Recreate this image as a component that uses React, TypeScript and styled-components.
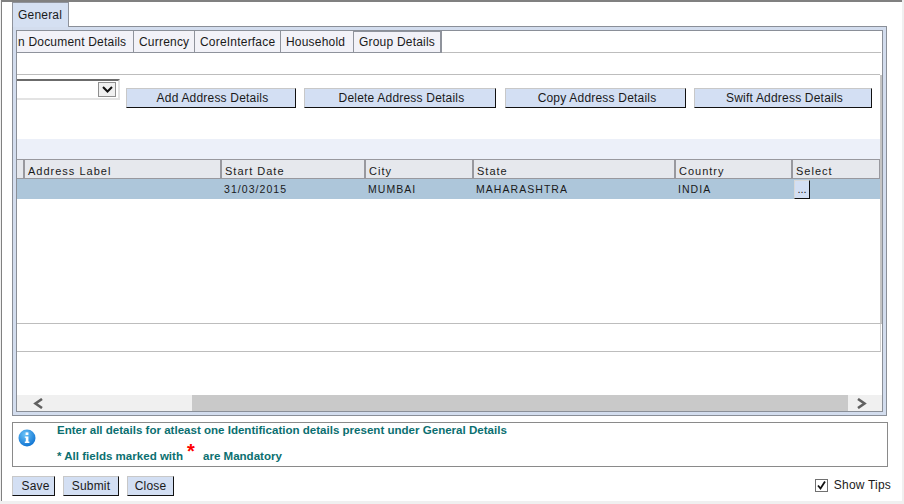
import * as React from 'react';
import styled, { createGlobalStyle } from 'styled-components';

const GlobalStyle = createGlobalStyle`
  html, body {
    margin: 0;
    padding: 0;
    background: #f0f0f0;
    font-family: 'Liberation Sans', Arial, sans-serif;
    overflow: hidden;
  }
`;

const columns = [
  { label: '', value: '', width: 8 },
  { label: 'Address Label', value: '', width: 197 },
  { label: 'Start Date', value: '31/03/2015', width: 144 },
  { label: 'City', value: 'MUMBAI', width: 108 },
  { label: 'State', value: 'MAHARASHTRA', width: 202 },
  { label: 'Country', value: 'INDIA', width: 117 },
  { label: 'Select', value: '', width: 87 },
];

const subTabs = ['n Document Details', 'Currency', 'CoreInterface', 'Household', 'Group Details'];

const actions = [
  { label: 'Add Address Details', width: 170, gap: 8 },
  { label: 'Delete Address Details', width: 192, gap: 9 },
  { label: 'Copy Address Details', width: 181, gap: 8 },
  { label: 'Swift Address Details', width: 178, gap: 0 },
];

const App = () => (
  <>
    <GlobalStyle />
    <Page>
      <Window>
        <TabStrip>
          <MainTab>General</MainTab>
        </TabStrip>
        <OuterPanel>
          <InnerPanel>
            <SubTabRow>
              {subTabs.map((t) => (
                <SubTab key={t}>{t}</SubTab>
              ))}
            </SubTabRow>
            <BlankRow />
            <Content>
              <Toolbar>
                <SelectBox>
                  <SelectArrow>
                    <svg width="11" height="7" viewBox="0 0 11 7">
                      <path d="M1 1l4.5 4.5L10 1" fill="none" stroke="#111" strokeWidth="2" />
                    </svg>
                  </SelectArrow>
                </SelectBox>
                <Actions>
                  {actions.map((a) => (
                    <ActionButton key={a.label} $width={a.width} $gap={a.gap}>
                      {a.label}
                    </ActionButton>
                  ))}
                </Actions>
              </Toolbar>
              <Band />
              <HeaderRow>
                {columns.map((c, i) => (
                  <HeaderCell key={i} $width={c.width}>
                    {c.label}
                  </HeaderCell>
                ))}
              </HeaderRow>
              <DataRow>
                {columns.map((c, i) => (
                  <DataCell key={i} $width={c.width}>
                    {c.label === 'Select' ? <PickButton>...</PickButton> : c.value}
                  </DataCell>
                ))}
              </DataRow>
              <TableBody />
            </Content>
            <FooterRow />
            <Spacer />
            <ScrollBar>
              <ScrollArrow>
                <svg width="10" height="11" viewBox="0 0 10 11">
                  <path d="M9 1L2.5 5.5 9 10" fill="none" stroke="#606060" strokeWidth="2.6" />
                </svg>
              </ScrollArrow>
              <ScrollThumb />
              <ScrollArrow>
                <svg width="10" height="11" viewBox="0 0 10 11">
                  <path d="M1 1l6.5 4.5L1 10" fill="none" stroke="#606060" strokeWidth="2.6" />
                </svg>
              </ScrollArrow>
            </ScrollBar>
          </InnerPanel>
        </OuterPanel>
        <MessageBox>
          <InfoIcon>
            <svg width="18" height="18" viewBox="0 0 18 18">
              <defs>
                <radialGradient id="infoFill" cx="40%" cy="30%" r="75%">
                  <stop offset="0%" stopColor="#6cc4f8" />
                  <stop offset="100%" stopColor="#0a6fd0" />
                </radialGradient>
              </defs>
              <circle cx="9" cy="9" r="8.5" fill="url(#infoFill)" />
              <rect x="7.6" y="3.4" width="2.8" height="2.6" fill="#fff" />
              <path d="M6.8 7.4h3.6v5.2h1v1.4H6.8v-1.4h1v-3.8h-1z" fill="#fff" />
            </svg>
          </InfoIcon>
          <Messages>
            <Message>Enter all details for atleast one Identification details present under General Details</Message>
            <MessageLast>
              * All fields marked with<Star>*</Star>are Mandatory
            </MessageLast>
          </Messages>
        </MessageBox>
        <BottomBar>
          <BottomButton $width={43} $inset={4}>Save</BottomButton>
          <BottomButton $width={56}>Submit</BottomButton>
          <BottomButton $width={47}>Close</BottomButton>
          <ShowTips>
            <CheckBox>
              <svg width="11" height="11" viewBox="0 0 11 11">
                <path d="M2 5.5l2.5 3L9 1.5" fill="none" stroke="#111" strokeWidth="1.8" />
              </svg>
            </CheckBox>
            Show Tips
          </ShowTips>
        </BottomBar>
      </Window>
    </Page>
  </>
);

export default App;

const Page = styled.div`
  width: 904px;
  height: 504px;
  overflow: hidden;
  background: #f0f0f0;
`;

const Window = styled.div`
  box-sizing: border-box;
  width: 901px;
  height: 501px;
  margin-left: 1px;
  padding: 0 0 0 10px;
  background: #fff;
  border-top: 2px solid #808080;
  border-left: 1px solid #808080;
  color: #1a1a1a;
  font-size: 12px;
  letter-spacing: 0.2px;
`;

const TabStrip = styled.div`
  display: flex;
  height: 24px;
`;

const MainTab = styled.div`
  box-sizing: border-box;
  width: 57px;
  height: 25px;
  padding-top: 5px;
  padding-left: 5px;
  background: #d5e0f2;
  border: 1px solid #8f939c;
  border-bottom: none;
`;

const OuterPanel = styled.div`
  box-sizing: border-box;
  width: 875px;
  height: 390px;
  padding: 3px;
  background: #d3ddee;
  border: 1px solid #8a8f98;
`;

const InnerPanel = styled.div`
  box-sizing: border-box;
  display: flex;
  flex-direction: column;
  height: 100%;
  background: #fff;
  border: 1px solid #8a8f98;
`;

const SubTabRow = styled.div`
  display: flex;
  box-sizing: border-box;
  height: 22px;
  flex: none;
  border-bottom: 1px solid #bdbdbd;
  margin-right: 1px;
`;

const SubTab = styled.div`
  box-sizing: border-box;
  height: 22px;
  padding: 4px 5px 0 5px;
  background: #f2f2f8;
  border-right: 1px solid #8f939c;
  border-bottom: 1px solid #8f939c;
  white-space: nowrap;
  &:first-child {
    width: 117px;
    padding-left: 1px;
    padding-right: 0;
  }
  &:nth-child(2) {
    width: 61px;
  }
  &:nth-child(3) {
    width: 86px;
  }
  &:nth-child(4) {
    width: 73px;
  }
  &:last-child {
    width: 88px;
    border-top: 1px solid #8f939c;
    border-right-width: 2px;
    padding-top: 3px;
  }
`;

const BlankRow = styled.div`
  box-sizing: border-box;
  flex: none;
  height: 22px;
  margin-right: 2px;
  border-bottom: 1px solid #bdbdbd;
`;

const Content = styled.div`
  box-sizing: border-box;
  flex: none;
  border-right: 2px solid #c4c4c4;
`;

const Toolbar = styled.div`
  display: flex;
  align-items: flex-start;
  height: 64px;
`;

const SelectBox = styled.div`
  box-sizing: border-box;
  display: flex;
  flex: none;
  justify-content: flex-end;
  width: 103px;
  height: 21px;
  margin-top: 4px;
  padding: 1px 2px 0 0;
  background: #fff;
  border-top: 2px solid #6b6b6b;
  border-right: 2px solid #e3e3e3;
  border-bottom: 2px solid #e3e3e3;
`;

const SelectArrow = styled.div`
  box-sizing: border-box;
  display: flex;
  align-items: center;
  justify-content: center;
  width: 18px;
  height: 15px;
  background: #f0f0f0;
  border: 1px solid #8f8f8f;
`;

const Actions = styled.div`
  display: flex;
  margin-top: 13px;
  margin-left: 6px;
`;

const ActionButton = styled.div<{ $width: number; $gap: number }>`
  box-sizing: border-box;
  width: ${(p) => p.$width}px;
  height: 20px;
  margin-right: ${(p) => p.$gap}px;
  padding: 2px 0 0 3px;
  color: #1a1a1a;
  text-align: center;
  background: #d3dff3;
  border-top: 1px solid #c8c8c8;
  border-left: 1px solid #c8c8c8;
  border-right: 1px solid #111;
  border-bottom: 1px solid #111;
`;

const Band = styled.div`
  height: 20px;
  background: #ecf0f9;
`;

const HeaderRow = styled.div`
  display: flex;
  box-sizing: border-box;
  height: 20px;
  background: #e6e8ed;
  border-bottom: 1px solid #98989e;
`;

const HeaderCell = styled.div<{ $width: number }>`
  box-sizing: border-box;
  flex: none;
  width: ${(p) => p.$width}px;
  padding: 5px 0 0 3px;
  font-size: 11px;
  letter-spacing: 1px;
  white-space: nowrap;
  border-top: 1px solid #98989e;
  border-right: 2px solid #98989e;
  &:last-child {
    border-right: 1px solid #98989e;
  }
`;

const DataRow = styled.div`
  display: flex;
  height: 20px;
  background: #adc6da;
`;

const DataCell = styled.div<{ $width: number }>`
  box-sizing: border-box;
  flex: none;
  width: ${(p) => p.$width}px;
  padding: 4px 0 0 2px;
  font-size: 10.5px;
  letter-spacing: 1.05px;
  white-space: nowrap;
`;

const PickButton = styled.div`
  box-sizing: border-box;
  width: 16px;
  height: 19px;
  margin: -3px 0 0 -1px;
  padding-top: 2px;
  font-size: 11px;
  letter-spacing: 0;
  text-align: center;
  background: #d3dff3;
  border-top: 1px solid #d8d8d8;
  border-left: 1px solid #d8d8d8;
  border-right: 1px solid #111;
  border-bottom: 1px solid #111;
`;

const TableBody = styled.div`
  box-sizing: border-box;
  height: 125px;
  margin-right: -2px;
  border-bottom: 1px solid #bdbdbd;
`;

const FooterRow = styled.div`
  box-sizing: border-box;
  flex: none;
  height: 28px;
  margin-right: 1px;
  border-right: 1px solid #d0d0d0;
  border-bottom: 1px solid #bdbdbd;
`;

const Spacer = styled.div`
  flex: 1;
`;

const ScrollBar = styled.div`
  display: flex;
  flex: none;
  height: 16px;
  background: #f0f0f0;
`;

const ScrollArrow = styled.div`
  display: flex;
  flex: none;
  align-items: center;
  box-sizing: border-box;
  &:first-child {
    width: 175px;
    padding-left: 16px;
  }
  &:last-child {
    width: 34px;
    padding-left: 9px;
  }
`;

const ScrollThumb = styled.div`
  flex: 1;
  background: #c9c9c9;
`;

const MessageBox = styled.div`
  box-sizing: border-box;
  display: flex;
  width: 876px;
  height: 45px;
  margin-top: 6px;
  border: 1px solid #8a8a8a;
`;

const InfoIcon = styled.div`
  flex: none;
  width: 44px;
  padding: 6px 0 0 5px;
  box-sizing: border-box;
`;

const Messages = styled.div`
  flex: 1;
  padding-top: 1px;
  color: #0b6f70;
  font-size: 11.55px;
  font-weight: bold;
  letter-spacing: 0;
`;

const Message = styled.div`
  height: 13px;
  line-height: 13px;
`;

const MessageLast = styled.div`
  display: flex;
  align-items: flex-start;
  height: 14px;
  margin-top: 12px;
  line-height: 14px;
`;

const Star = styled.span`
  display: block;
  width: 20px;
  margin-top: -8px;
  padding-left: 4px;
  box-sizing: border-box;
  color: #f00;
  font-size: 20px;
  line-height: 20px;
`;

const BottomBar = styled.div`
  display: flex;
  align-items: flex-start;
  margin-top: 9px;
  width: 879px;
`;

const BottomButton = styled.div<{ $width: number; $inset?: number }>`
  box-sizing: border-box;
  width: ${(p) => p.$width}px;
  height: 20px;
  margin-right: 8px;
  padding: 2px 0 0 ${(p) => p.$inset ?? 0}px;
  text-align: center;
  background: #d3dff3;
  border-top: 1px solid #c8c8c8;
  border-left: 1px solid #c8c8c8;
  border-right: 1px solid #111;
  border-bottom: 1px solid #111;
`;

const ShowTips = styled.div`
  display: flex;
  align-items: center;
  gap: 6px;
  margin-left: auto;
  margin-top: 2px;
`;

const CheckBox = styled.div`
  box-sizing: border-box;
  display: flex;
  align-items: center;
  justify-content: center;
  width: 13px;
  height: 13px;
  background: #fff;
  border: 1px solid #707070;
`;
